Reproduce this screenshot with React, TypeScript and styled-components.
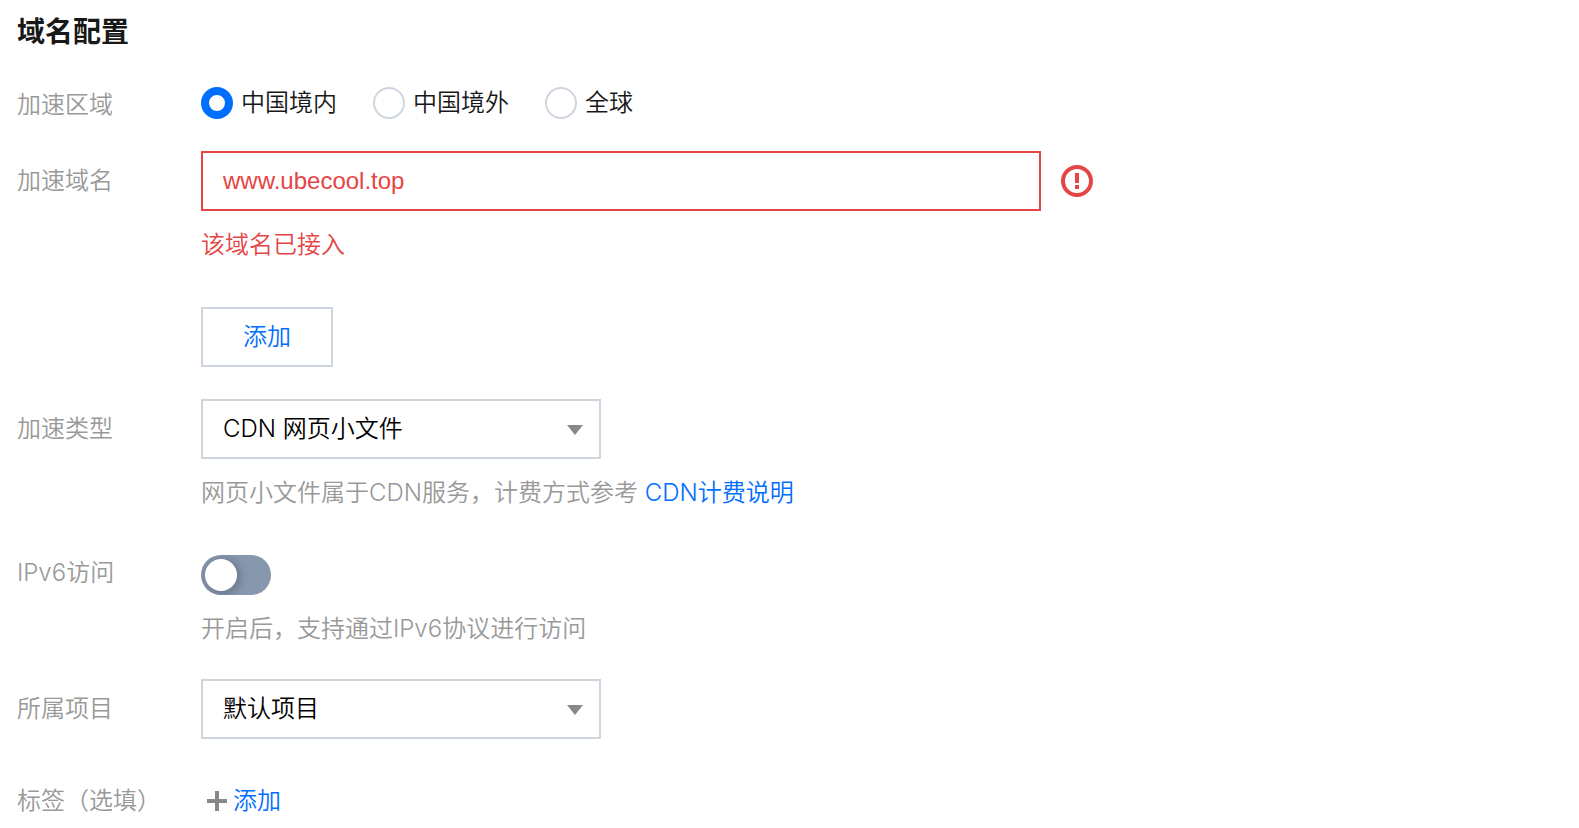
import React, { useState } from "react";
import styled, { createGlobalStyle } from "styled-components";

const color = {
  text: "#181818",
  muted: "#999999",
  primary: "#006eff",
  danger: "#e54545",
  border: "#cfd5de",
  icon: "#888888",
};

const GlobalStyle = createGlobalStyle`
  *, *::before, *::after { box-sizing: border-box; }
  body {
    margin: 0;
    background: #ffffff;
    color: ${color.text};
    font-family: Inter, "Noto Sans CJK SC", sans-serif;
    font-size: 24px;
    font-weight: 350;
    line-height: 36px;
  }
  button, input, select { font: inherit; margin: 0; border-radius: 0; }
`;

const Form = styled.form`
  padding: 12px 17px 8px;
`;

const Title = styled.h1`
  margin: 0 0 35px;
  font-size: 28px;
  font-weight: 700;
  line-height: 40px;
`;

const Row = styled.div<{ $gap?: number }>`
  display: grid;
  grid-template-columns: 184px minmax(0, 1fr);
  align-items: start;
  margin-bottom: ${(p) => p.$gap ?? 32}px;
`;

const Label = styled.label<{ $boxed?: boolean }>`
  padding-top: ${(p) => (p.$boxed ? 12 : 0)}px;
  color: ${color.muted};
  white-space: nowrap;
`;

const Field = styled.div`
  display: flex;
  flex-direction: column;
  align-items: flex-start;
  gap: 16px;
`;

const RadioGroup = styled.div`
  display: flex;
  flex-wrap: wrap;
  gap: 36px;
`;

const RadioLabel = styled.label`
  display: flex;
  align-items: center;
  gap: 8px;
  line-height: 32px;
  cursor: pointer;
`;

const Radio = styled.input`
  appearance: none;
  width: 32px;
  height: 32px;
  border: 2px solid ${color.border};
  border-radius: 50% !important;
  background: #ffffff;

  &:checked { border: 8px solid ${color.primary}; }
`;

const InputLine = styled.div`
  display: flex;
  align-items: center;
  gap: 20px;
  width: 100%;
`;

const DomainInput = styled.input`
  flex: 0 1 840px;
  min-width: 0;
  height: 60px;
  padding: 0 20px;
  border: 2px solid ${color.danger};
  background: #ffffff;
  color: ${color.danger};
  font-family: "Liberation Sans", sans-serif;
  outline: none;
`;

const Hint = styled.p<{ $error?: boolean }>`
  margin: 0;
  color: ${(p) => (p.$error ? color.danger : color.muted)};
`;

const Link = styled.a`
  color: ${color.primary};
  text-decoration: none;
`;

const OutlineButton = styled.button`
  width: 132px;
  height: 60px;
  padding: 0;
  border: 2px solid ${color.border};
  background: #ffffff;
  color: ${color.primary};
  cursor: pointer;
`;

const SelectBox = styled.div`
  position: relative;
  width: 100%;
  max-width: 400px;
`;

const NativeSelect = styled.select`
  display: block;
  appearance: none;
  width: 100%;
  height: 60px;
  padding: 0 56px 0 20px;
  border: 2px solid ${color.border};
  background: #ffffff;
  color: #000000;
  outline: none;
`;

const Caret = styled.svg`
  position: absolute;
  top: 26px;
  right: 18px;
  pointer-events: none;
`;

const Switch = styled.input`
  appearance: none;
  display: flex;
  align-items: center;
  width: 70px;
  height: 40px;
  padding: 0 4px;
  border-radius: 20px !important;
  background: #8797ae;
  overflow: hidden;
  cursor: pointer;

  &::before {
    content: "";
    width: 32px;
    height: 32px;
    border-radius: 50%;
    background: #ffffff;
    box-shadow: 2px 2px 8px 2px rgba(0, 0, 0, 0.2);
  }
  &:checked {
    justify-content: flex-end;
    background: ${color.primary};
  }
`;

const AddTag = styled.button`
  display: flex;
  align-items: center;
  gap: 6px;
  padding: 12px 6px 0;
  border: 0;
  background: none;
  color: ${color.primary};
  cursor: pointer;
`;

function Select({ id, options }: { id: string; options: string[] }) {
  return (
    <SelectBox>
      <NativeSelect id={id}>
        {options.map((o) => (
          <option key={o}>{o}</option>
        ))}
      </NativeSelect>
      <Caret width="16" height="10" viewBox="0 0 16 10" aria-hidden="true">
        <path d="M0 0h16L8 10z" fill={color.icon} />
      </Caret>
    </SelectBox>
  );
}

const regions = ["中国境内", "中国境外", "全球"];

export default function App() {
  const [region, setRegion] = useState(regions[0]);
  const [domain, setDomain] = useState("www.ubecool.top");
  const [ipv6, setIpv6] = useState(false);

  return (
    <>
      <GlobalStyle />
      <Form onSubmit={(e) => e.preventDefault()}>
        <Title>域名配置</Title>

        <Row $gap={28}>
          <Label as="span" id="region-label">加速区域</Label>
          <RadioGroup role="radiogroup" aria-labelledby="region-label">
            {regions.map((r) => (
              <RadioLabel key={r}>
                <Radio
                  type="radio"
                  name="region"
                  checked={region === r}
                  onChange={() => setRegion(r)}
                />
                {r}
              </RadioLabel>
            ))}
          </RadioGroup>
        </Row>

        <Row $gap={44}>
          <Label $boxed htmlFor="domain">加速域名</Label>
          <Field>
            <InputLine>
              <DomainInput
                id="domain"
                type="text"
                value={domain}
                aria-invalid="true"
                aria-describedby="domain-error"
                onChange={(e) => setDomain(e.target.value)}
              />
              <svg width="32" height="32" viewBox="0 0 32 32" aria-hidden="true">
                <circle cx="16" cy="16" r="14" fill="none" stroke={color.danger} strokeWidth="4" />
                <path d="M14 8h4v10h-4zM14 20h4v4h-4z" fill={color.danger} />
              </svg>
            </InputLine>
            <Hint $error id="domain-error">该域名已接入</Hint>
          </Field>
        </Row>

        <Row>
          <span />
          <OutlineButton type="button">添加</OutlineButton>
        </Row>

        <Row $gap={44}>
          <Label $boxed htmlFor="type">加速类型</Label>
          <Field>
            <Select id="type" options={["CDN 网页小文件"]} />
            <Hint>
              网页小文件属于CDN服务，计费方式参考 <Link href="#billing">CDN计费说明</Link>
            </Hint>
          </Field>
        </Row>

        <Row>
          <Label htmlFor="ipv6">IPv6访问</Label>
          <Field>
            <Switch
              id="ipv6"
              type="checkbox"
              role="switch"
              checked={ipv6}
              onChange={(e) => setIpv6(e.target.checked)}
            />
            <Hint>开启后，支持通过IPv6协议进行访问</Hint>
          </Field>
        </Row>

        <Row>
          <Label $boxed htmlFor="project">所属项目</Label>
          <Field>
            <Select id="project" options={["默认项目"]} />
          </Field>
        </Row>

        <Row $gap={0}>
          <Label $boxed as="span">标签（选填）</Label>
          <Field>
            <AddTag type="button">
              <svg width="20" height="20" viewBox="0 0 20 20" aria-hidden="true">
                <path d="M8 0h4v8h8v4h-8v8H8v-8H0V8h8z" fill={color.icon} />
              </svg>
              添加
            </AddTag>
          </Field>
        </Row>
      </Form>
    </>
  );
}
